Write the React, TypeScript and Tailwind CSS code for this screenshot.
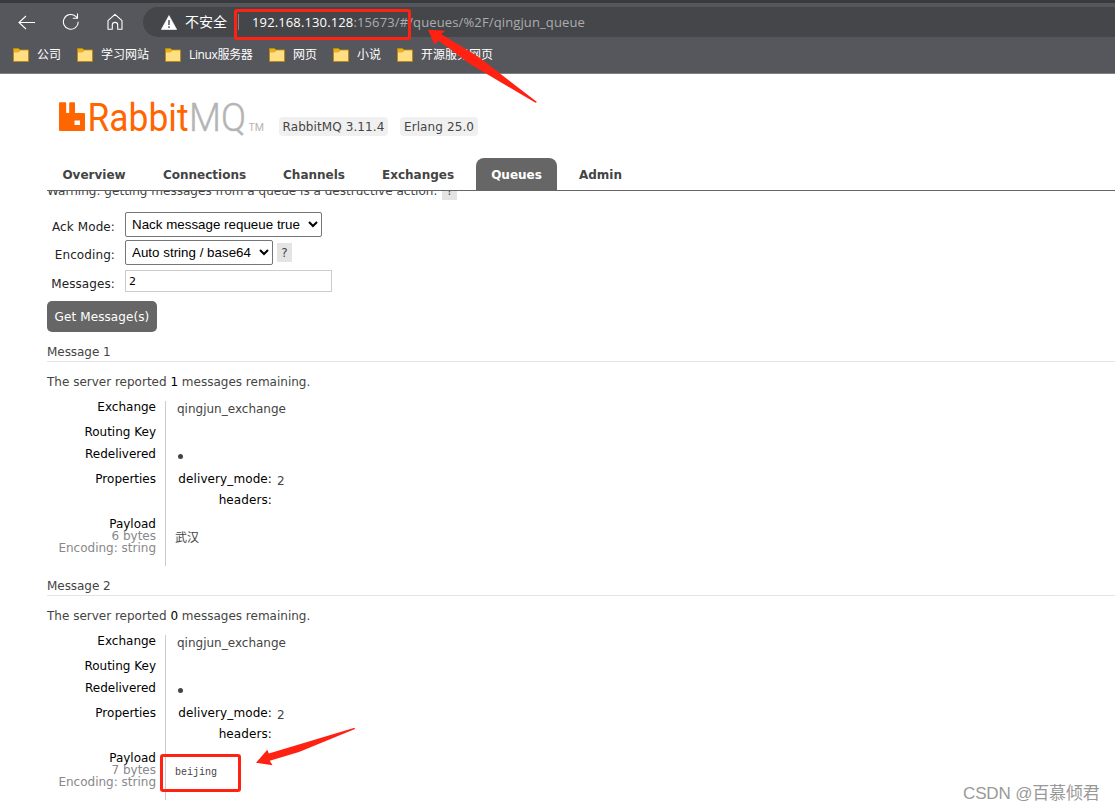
import React from 'react';

interface Message {
  id: number;
  remaining: number;
  exchange: string;
  bytes: number;
  payload: string;
}

const bookmarks = [
  { label: '公司', width: 'w-[64px]' },
  { label: '学习网站', width: 'w-[88px]' },
  { label: 'Linux服务器', width: 'w-[104px]', tight: true },
  { label: '网页', width: 'w-[64px]' },
  { label: '小说', width: 'w-[64px]' },
  { label: '开源服务网页', width: 'w-[120px]' },
];

const tabs = [
  { label: 'Overview', width: 'w-[94px]' },
  { label: 'Connections', width: 'w-[113px]' },
  { label: 'Channels', width: 'w-[92px]' },
  { label: 'Exchanges', width: 'w-[102px]' },
  { label: 'Queues', width: 'w-[81px]', active: true },
  { label: 'Admin', width: 'w-[73px]' },
];

const messages: Message[] = [
  { id: 1, remaining: 1, exchange: 'qingjun_exchange', bytes: 6, payload: '武汉' },
  { id: 2, remaining: 0, exchange: 'qingjun_exchange', bytes: 7, payload: 'beijing' },
];

function FolderIcon() {
  return (
    <svg width="16" height="14" viewBox="0 0 16 14" className="shrink-0">
      <path d="M0.5 0.5H5.5L7 2H15.5V13.5H0.5Z" fill="#e8b21c" stroke="#b98a10" />
      <path d="M1 4.5H5.5L7.5 2.5H15V13H1Z" fill="#ffdf85" />
    </svg>
  );
}

function BrowserBar() {
  return (
    <div className="h-[74px] overflow-hidden border-b border-[#808185] bg-[#56575c] font-['Open_Sans','Noto_Sans_CJK_SC',sans-serif] tracking-normal text-white">
      <div className="h-[3px] bg-[#3a3b3f]" />
      <div className="mt-1 flex h-[30px] items-center">
        <svg width="17" height="16" viewBox="0 0 17 16" fill="none" stroke="#fff" strokeWidth="1.1" className="mt-px ml-[18px] shrink-0">
          <path d="M8 1L1 7.5L8 14M1 7.5H17" />
        </svg>
        <svg width="18" height="18" viewBox="0 0 18 18" fill="none" stroke="#fff" strokeWidth="1.1" className="ml-[27px] shrink-0">
          <path d="M16.2 8.7A7.4 7.4 0 1 1 13.8 3.4L15.5 5M15.5 0.5V5.2H10.8" />
        </svg>
        <svg width="16" height="18" viewBox="0 0 16 18" fill="none" stroke="#fff" strokeWidth="1.1" className="ml-[27px] shrink-0">
          <path d="M1 7.6L8 1.3L15 7.6V16.3H10.7V11.8Q10.7 9.4 8 9.4Q5.3 9.4 5.3 11.8V16.3H1Z" strokeLinejoin="round" />
        </svg>
        <div className="ml-[20px] flex h-[30px] flex-1 items-center rounded-l-full bg-[#45464a] pl-[18px]">
          <svg width="16" height="15" viewBox="0 0 16 15" className="shrink-0">
            <path d="M8 0.5L15.7 14.5H0.3Z" fill="#fff" stroke="#fff" strokeLinejoin="round" strokeWidth="0.6" />
            <path d="M8 5V10M8 11.3V13" stroke="#45464a" strokeWidth="1.4" />
          </svg>
          <span className="-mt-px ml-[8px] text-[14px] whitespace-nowrap">不安全</span>
          <span className="ml-[11px] h-[16px] w-px bg-[#85868a]" />
          <span className="mt-px ml-[13px] text-[13px] tracking-[0.13px] whitespace-nowrap text-[#acadaf]">
            <span className="text-white">192.168.130.128</span>:15673/#/queues/%2F/qingjun_queue
          </span>
        </div>
      </div>
      <div className="flex h-[36px] items-center pl-[13px]">
        {bookmarks.map((bookmark) => (
          <div key={bookmark.label} className={`flex shrink-0 items-center gap-2 text-[12px] whitespace-nowrap ${bookmark.width}`}>
            <FolderIcon />
            <span className={bookmark.tight ? 'tracking-[-0.35px]' : ''}>{bookmark.label}</span>
          </div>
        ))}
      </div>
    </div>
  );
}

function Logo() {
  return (
    <svg width="206" height="50" viewBox="0 -8 206 50" letterSpacing="0" className="-mt-[8px] shrink-0">
      <path
        fill="#f60"
        fillRule="evenodd"
        d="M0 2.3Q0 1.3 1 1.3H6.2Q7.2 1.3 7.2 2.3V12H10.2V2.3Q10.2 1.3 11.2 1.3H15Q16 1.3 16 2.3V12H25Q26 12 26 13V29Q26 30 25 30H1Q0 30 0 29ZM15.5 19.5V24H21V19.5Z"
      />
      <text x="28.5" y="29.5" fontFamily="Roboto, sans-serif" fontWeight="400" fontSize="39" fill="#f60" textLength="101" lengthAdjust="spacingAndGlyphs">
        Rabbit
      </text>
      <text x="130" y="29.5" fontFamily="Roboto, sans-serif" fontWeight="300" fontSize="39" fill="#b4b4b4" stroke="#b4b4b4" strokeWidth="0.4" textLength="57" lengthAdjust="spacingAndGlyphs">
        MQ
      </text>
      <text x="189.5" y="29.5" fontFamily="Roboto, sans-serif" fontSize="10" fill="#b4b4b4" textLength="15.5" lengthAdjust="spacingAndGlyphs">
        TM
      </text>
    </svg>
  );
}

function PageHeader() {
  return (
    <header className="ml-[47px] flex h-[117px] flex-col border-b border-[#666]">
      <div className="flex h-[84px] items-start pt-[27px] pl-[12px]">
        <Logo />
        <span className="mt-[16px] ml-[14px] flex h-[19px] w-[109px] items-center justify-center rounded bg-[#f0f0f0] tracking-[0.1px] whitespace-nowrap">
          RabbitMQ 3.11.4
        </span>
        <span className="mt-[16px] ml-[12px] flex h-[19px] w-[78px] items-center justify-center rounded bg-[#f0f0f0] tracking-[0.1px] whitespace-nowrap">
          Erlang 25.0
        </span>
      </div>
      <nav className="flex gap-[7px] font-bold">
        {tabs.map((tab) => (
          <a
            key={tab.label}
            className={`flex h-[32px] items-center justify-center rounded-t-lg pt-px whitespace-nowrap ${tab.width} ${
              tab.active ? 'bg-[#666] text-white' : ''
            }`}
          >
            {tab.label}
          </a>
        ))}
      </nav>
    </header>
  );
}

function Help() {
  return <span className="inline-flex h-[19px] w-[15px] items-center justify-center bg-[#e4e4e4] text-[12px]">?</span>;
}

function GetMessagesForm() {
  return (
    <form className="ml-[47px]">
      {/* Scrolled partly under the page header */}
      <div className="h-[21px] overflow-hidden">
        <p className="-mt-[10px] flex h-[19px] items-center gap-[5px] tracking-[0.02px] whitespace-nowrap">
          Warning: getting messages from a queue is a destructive action.
          <Help />
        </p>
      </div>
      <div className="flex h-[28px] items-start">
        <label className="mt-[5px] w-[68px] text-right leading-[20px] tracking-[0.1px] whitespace-nowrap text-[#222]">Ack Mode:</label>
        <select className="ml-[10px] h-[25px] w-[197px] rounded-[2px] border border-[#767676] bg-white px-[2px] font-['Liberation_Sans',sans-serif] text-[13.33px] tracking-[0.02px] text-black">
          <option>Nack message requeue true</option>
        </select>
      </div>
      <div className="flex h-[30px] items-start">
        <label className="mt-[5px] w-[68px] text-right leading-[20px] tracking-[0.1px] whitespace-nowrap text-[#222]">Encoding:</label>
        <select className="ml-[10px] h-[25px] w-[148px] rounded-[2px] border border-[#767676] bg-white px-[2px] font-['Liberation_Sans',sans-serif] text-[13.33px] tracking-[0.02px] text-black">
          <option>Auto string / base64</option>
        </select>
        <span className="mt-[3px] ml-[4px] flex">
          <Help />
        </span>
      </div>
      <div className="flex h-[31px] items-start">
        <label className="mt-[4px] w-[68px] text-right leading-[20px] tracking-[0.1px] whitespace-nowrap text-[#222]">Messages:</label>
        <input
          type="text"
          defaultValue="2"
          className="ml-[10px] h-[22px] w-[207px] border border-[#ccc] bg-white px-[3px] text-[11px] text-black"
        />
      </div>
      <button
        type="button"
        className="flex h-[31px] w-[110px] items-center justify-center rounded-[5px] bg-[#666] tracking-[0.1px] whitespace-nowrap text-white"
      >
        Get Message(s)
      </button>
    </form>
  );
}

function MessageBlock({ message }: { message: Message }) {
  return (
    <section className="ml-[47px] h-[234px]">
      <h3 className="h-[22px] border-b border-[#e4e4e4] pt-px leading-[22px] tracking-[-0.05px]">Message {message.id}</h3>
      <p className="mt-[10px] h-[20px] leading-[20px] whitespace-nowrap">
        The server reported <span className="text-black">{message.remaining}</span> messages remaining.
      </p>
      <div className="mt-[9px] flex h-[165px] leading-[12px]">
        <div className="flex w-[119px] flex-col items-end border-r border-[#ccc] pr-[9px] whitespace-nowrap text-black">
          <div className="h-[25px]">Exchange</div>
          <div className="h-[22px]">Routing Key</div>
          <div className="h-[25px]">Redelivered</div>
          <div className="h-[45px]">Properties</div>
          <div>Payload</div>
          <div className="text-[#888]">{message.bytes} bytes</div>
          <div className="text-[#888]">Encoding: string</div>
        </div>
        <div className="flex flex-col pl-[10px]">
          <div className="mt-[2px] h-[47px] pl-px">{message.exchange}</div>
          <div className="h-[23px] pt-[4px] pl-[1.5px]">
            <div className="h-[5px] w-[5px] rounded-full bg-[#444]" />
          </div>
          <div className="flex h-[60px]">
            <div className="w-[96px] text-right tracking-[0.1px] whitespace-nowrap text-black">
              <div className="h-[21px]">delivery_mode:</div>
              <div>headers:</div>
            </div>
            <div className="mt-[2px] ml-[5px]">2</div>
          </div>
          <pre className="-ml-px font-['Liberation_Mono','Noto_Sans_CJK_SC',monospace] text-[10px] leading-[12px] tracking-normal">
            <span className={message.id === 1 ? 'text-[12px]' : ''}>{message.payload}</span>
          </pre>
        </div>
      </div>
    </section>
  );
}

function Annotations() {
  return (
    <>
      <div className="absolute top-[9px] left-[234px] h-[31px] w-[177px] rounded-[3px] border-3 border-[#ff2213]" />
      <div className="absolute top-[754px] left-[160px] h-[38px] w-[81px] rounded-[3px] border-3 border-[#ff2213]" />
      <svg width="1115" height="811" viewBox="0 0 1115 811" fill="#ff2213" className="pointer-events-none absolute top-0 left-0">
        <path d="M428 29.8L445.5 30.8L441 34L478 56.5L537 102L535.5 102.8L470 64L438.5 40.5L434.5 44.5Z" />
        <path d="M256 762.7L267.3 749.7L268.8 753.6L354.5 727.8L355 729L299 752L269.8 760.7L272.5 765.3Z" />
      </svg>
      <div className="absolute top-[782px] left-[963px] font-['Liberation_Sans','Noto_Sans_CJK_SC',sans-serif] text-[17px] leading-[24px] tracking-[-0.15px] whitespace-nowrap text-[#999]">
        CSDN @百慕倾君
      </div>
    </>
  );
}

export default function App() {
  return (
    <div className="relative h-[811px] w-[1115px] overflow-hidden bg-white font-['DejaVu_Sans',Verdana,sans-serif] text-[12px] text-[#444]">
      <BrowserBar />
      <PageHeader />
      <GetMessagesForm />
      <div className="mt-[8px]">
        {messages.map((message) => (
          <MessageBlock key={message.id} message={message} />
        ))}
      </div>
      <Annotations />
    </div>
  );
}
